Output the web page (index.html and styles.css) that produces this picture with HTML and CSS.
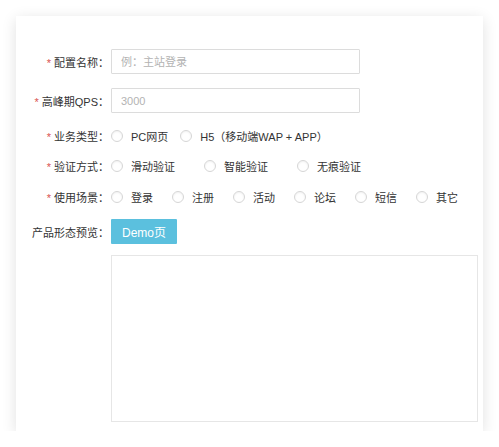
FILE: index.html
```html
<!DOCTYPE html>
<html lang="zh">
<head>
<meta charset="utf-8">
<link rel="stylesheet" href="styles.css">
</head>
<body>
<div class="card">
  <div class="form">
    <div class="row row-input">
      <div class="label"><span class="req">*</span>配置名称：</div>
      <div class="field"><input class="text" type="text" placeholder="例：主站登录"></div>
    </div>
    <div class="row row-input">
      <div class="label"><span class="req">*</span>高峰期QPS：</div>
      <div class="field"><input class="text" type="text" placeholder="3000"></div>
    </div>
    <div class="row row-radio r-type">
      <div class="label"><span class="req">*</span>业务类型：</div>
      <div class="field radios">
        <label class="radio"><span class="dot"></span>PC网页</label>
        <label class="radio"><span class="dot"></span>H5（移动端WAP + APP）</label>
      </div>
    </div>
    <div class="row row-radio r-verify">
      <div class="label"><span class="req">*</span>验证方式：</div>
      <div class="field radios">
        <label class="radio"><span class="dot"></span>滑动验证</label>
        <label class="radio"><span class="dot"></span>智能验证</label>
        <label class="radio"><span class="dot"></span>无痕验证</label>
      </div>
    </div>
    <div class="row row-radio r-scene">
      <div class="label"><span class="req">*</span>使用场景：</div>
      <div class="field radios">
        <label class="radio"><span class="dot"></span>登录</label>
        <label class="radio"><span class="dot"></span>注册</label>
        <label class="radio"><span class="dot"></span>活动</label>
        <label class="radio"><span class="dot"></span>论坛</label>
        <label class="radio"><span class="dot"></span>短信</label>
        <label class="radio"><span class="dot"></span>其它</label>
      </div>
    </div>
    <div class="row row-btn">
      <div class="label">产品形态预览：</div>
      <div class="field"><button class="btn" type="button">Demo页</button></div>
    </div>
    <div class="row row-preview">
      <div class="label"></div>
      <div class="field"><div class="preview"></div></div>
    </div>
  </div>
</div>
</body>
</html>
```
FILE: styles.css
```css
html, body {
  margin: 0;
  padding: 0;
  background: #ffffff;
}
body {
  font-family: "Liberation Sans", "Noto Sans CJK SC", sans-serif;
  font-size: 11px;
  color: #333333;
}
.card {
  margin: 16px 0 0 16px;
  width: 467px;
  height: 415px;
  box-sizing: border-box;
  background: #ffffff;
  box-shadow: 0 3px 14px rgba(0, 0, 0, 0.12);
  padding: 33px 5px 0 0;
}
.form {
  display: flex;
  flex-direction: column;
}
.row {
  display: flex;
  align-items: center;
}
.label {
  width: 93px;
  flex: none;
  text-align: right;
  color: #333333;
  white-space: nowrap;
  margin-right: 2px;
}
.req {
  color: #d9534f;
  margin-right: 3px;
}
.field {
  flex: 1;
  display: flex;
  align-items: center;
}
.row-input { height: 25px; }
.row-input + .row-input { margin-top: 14px; }
.row-radio { height: 18px; }
.r-type { margin-top: 14px; }
.r-verify { margin-top: 12px; }
.r-scene { margin-top: 13px; }
.row-btn { height: 25px; margin-top: 13px; }
.row-preview { margin-top: 11px; align-items: flex-start; }

.text {
  width: 249px;
  height: 25px;
  box-sizing: border-box;
  border: 1px solid #dcdcdc;
  border-radius: 1px;
  padding: 0 9px;
  font-family: inherit;
  font-size: 11px;
  color: #333333;
  outline: none;
}
.text::placeholder {
  color: #b3b3b3;
}
.radios {
  white-space: nowrap;
}
.radio {
  display: flex;
  align-items: center;
  color: #333333;
}
.dot {
  width: 12px;
  height: 12px;
  box-sizing: border-box;
  border: 1px solid #d6d6d6;
  border-radius: 50%;
  margin-right: 8px;
  background: #fff;
  box-shadow: inset 0 1px 2px rgba(0, 0, 0, 0.06);
}
.r-type .radio { margin-right: 12px; }
.r-verify .radio { margin-right: 29px; }
.r-scene .radio { margin-right: 19px; }
.btn {
  height: 25px;
  width: 66px;
  border: none;
  border-radius: 1px;
  background: #5bc0de;
  color: #ffffff;
  font-family: inherit;
  font-size: 12px;
  padding: 0;
}
.preview {
  width: 367px;
  height: 167px;
  box-sizing: border-box;
  border: 1px solid #e6e6e6;
}
```
